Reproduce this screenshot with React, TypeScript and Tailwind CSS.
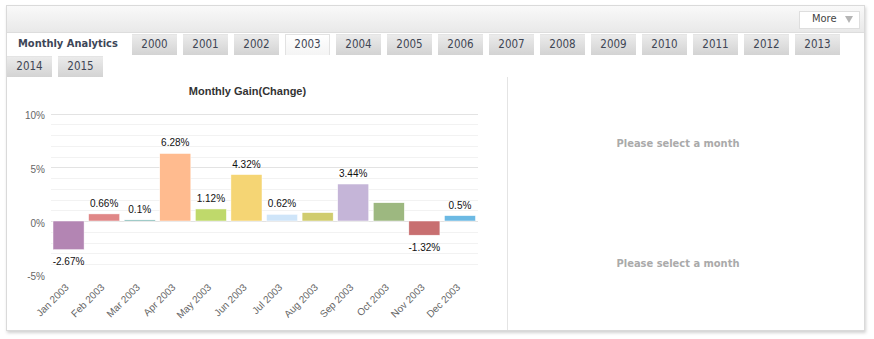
import React from "react";

const UI_FONT = "font-['DejaVu_Sans_Condensed','DejaVu_Sans',Verdana,sans-serif]";
const CHART_FONT = "'Liberation Sans', Arial, sans-serif";

const years = Array.from({ length: 16 }, (_, i) => 2000 + i);

interface Bar {
  month: string;
  value: number;
  color: string;
  showLabel: boolean;
}

const bars: Bar[] = [
  { month: "Jan", value: -2.67, color: "#b385b3", showLabel: true },
  { month: "Feb", value: 0.66, color: "#e08787", showLabel: true },
  { month: "Mar", value: 0.1, color: "#5aa6a0", showLabel: true },
  { month: "Apr", value: 6.28, color: "#ffbb8f", showLabel: true },
  { month: "May", value: 1.12, color: "#bfd96b", showLabel: true },
  { month: "Jun", value: 4.32, color: "#f5d574", showLabel: true },
  { month: "Jul", value: 0.62, color: "#cfe5f9", showLabel: true },
  { month: "Aug", value: 0.78, color: "#d0cc6e", showLabel: false },
  { month: "Sep", value: 3.44, color: "#c5b5d8", showLabel: true },
  { month: "Oct", value: 1.7, color: "#9db880", showLabel: false },
  { month: "Nov", value: -1.32, color: "#c86f70", showLabel: true },
  { month: "Dec", value: 0.5, color: "#6cb9e3", showLabel: true },
];

const Y0 = 221;
const K = 10.75;
const yOf = (v: number) => Y0 - v * K;
const PLOT_L = 50;
const PLOT_R = 477;
const SLOT = (PLOT_R - PLOT_L) / 12;

function GainChart() {
  const grid = Array.from({ length: 15 }, (_, i) => 10 - i);
  return (
    <svg width={501} height={254} viewBox="6 77 501 254" className="block" fontFamily={CHART_FONT}>
      <text x={246.5} y={95} textAnchor="middle" fontSize={11} fontWeight="bold" fill="#333">
        Monthly Gain(Change)
      </text>
      {grid.map((v) => (
        <line
          key={v}
          x1={PLOT_L}
          x2={PLOT_R}
          y1={Math.round(yOf(v)) + 0.5}
          y2={Math.round(yOf(v)) + 0.5}
          stroke={v % 5 === 0 ? "#e3e3e3" : "#f2f2f2"}
          strokeWidth={1}
        />
      ))}
      {[10, 5, 0, -5].map((v) => (
        <text key={v} x={44} y={yOf(v) + 5.5} textAnchor="end" fontSize={10} fill="#666">
          {v}%
        </text>
      ))}
      {bars.map((b, i) => {
        const x = PLOT_L + i * SLOT + 2;
        const w = SLOT - 4.5;
        const cx = x + w / 2;
        const top = b.value >= 0 ? yOf(b.value) : Y0;
        const h = Math.max(Math.abs(b.value) * K, 1);
        return (
          <g key={b.month}>
            <rect x={x} y={top} width={w} height={h} fill={b.color} stroke="#fff" strokeWidth={0.5} />
            {b.showLabel && (
              <text
                x={cx}
                y={b.value >= 0 ? top - 7 : Y0 + h + 15.5}
                textAnchor="middle"
                fontSize={10}
                fill="#111"
              >
                {b.value}%
              </text>
            )}
            <text
              x={cx + 1}
              y={288}
              textAnchor="end"
              fontSize={10}
              fill="#666"
              transform={`rotate(-45 ${cx + 1} 288)`}
            >
              {b.month} 2003
            </text>
          </g>
        );
      })}
    </svg>
  );
}

export default function App() {
  return (
    <div className="pl-[6px] pt-[5px] bg-white w-[874px] h-[339px]">
      <div
        className={`w-[859px] h-[326px] border border-[#dadada] bg-white shadow-[1px_2px_3px_rgba(0,0,0,0.18)] flex flex-col ${UI_FONT}`}
      >
        <div className="h-[27px] shrink-0 flex items-center justify-end pr-[4px] bg-linear-to-b from-[#f9f9f9] to-[#e9e9e9] border-b border-[#dddddd]">
          <button className="w-[61px] h-[18px] mt-[1px] bg-white border border-[#dedede] flex items-center justify-between pl-[12px] pr-[6px] text-[11px] text-[#444]">
            <span>More</span>
            <span className="w-0 h-0 border-l-[4px] border-r-[4px] border-t-[7px] border-l-transparent border-r-transparent border-t-[#b5b5b5]" />
          </button>
        </div>
        <div className="flex flex-wrap gap-x-[6px] gap-y-[1px] pt-[1px] shrink-0">
          <div className="w-[119px] h-[21px] flex items-center pl-[11px] text-[11px] font-bold text-[#3d4657] bg-white">
            Monthly Analytics
          </div>
          {years.map((y) =>
            y === 2003 ? (
              <div
                key={y}
                className="w-[45px] h-[21px] flex items-center justify-center text-[11.5px] text-[#3f4654] bg-linear-to-b from-white to-[#f4f4f4] border border-b-0 border-[#e2e2e2]"
              >
                {y}
              </div>
            ) : (
              <div
                key={y}
                className="w-[45px] h-[21px] flex items-center justify-center text-[11.5px] text-[#3f4654] bg-linear-to-b from-[#ebebeb] to-[#d3d3d3] border-t border-[#e4e4e4]"
              >
                {y}
              </div>
            )
          )}
        </div>
        <div className="flex flex-1 min-h-0">
          <div className="w-[501px] shrink-0 border-r border-[#e4e4e4]">
            <GainChart />
          </div>
          <div className="flex-1 flex flex-col pt-[7px] pr-[16px] text-[11px] font-bold text-[#aaaaaa]">
            <div className="h-[120px] flex items-center justify-center">Please select a month</div>
            <div className="h-[120px] flex items-center justify-center">Please select a month</div>
          </div>
        </div>
      </div>
    </div>
  );
}
